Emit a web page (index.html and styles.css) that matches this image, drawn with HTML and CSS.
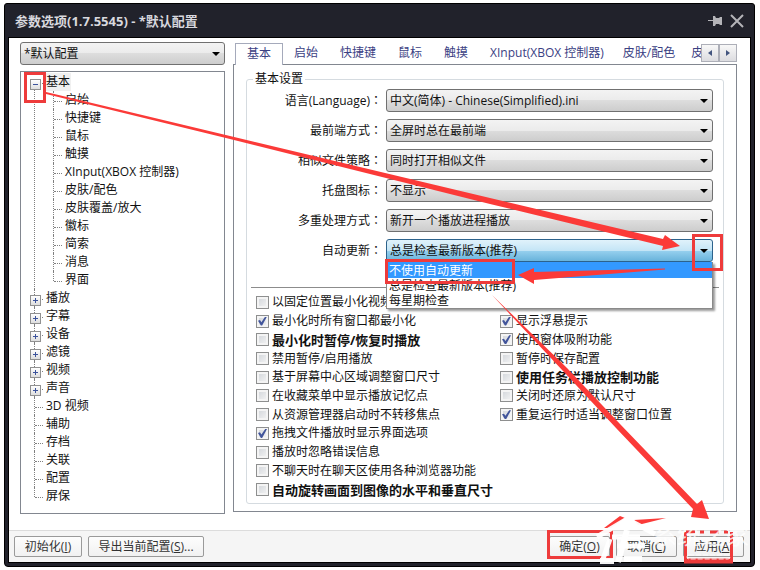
FILE: index.html
```
<!DOCTYPE html>
<html lang="zh-CN">
<head>
  <meta charset="UTF-8" />
  <meta name="viewport" content="width=device-width, initial-scale=1.0"/>
  <title>参数选项</title>
  <link rel="stylesheet" href="styles.css">
</head>
<body>
  <div class="window">
    <header class="titlebar">
      <h1>参数选项(1.7.5545) - *默认配置</h1>
      <button class="title-btn" aria-label="置顶">
        <svg width="14" height="11" viewBox="0 0 14 11"><path d="M0 5h5V1h2l1 2h3l1-1h2v8h-2l-1-1H8l-1 2H5V6H0z" fill="#b4b4b8"/></svg>
      </button>
      <button class="title-btn" aria-label="关闭">
        <svg width="14" height="14" viewBox="0 0 14 14"><path d="M1 1l12 12M13 1L1 13" stroke="#b4b4b8" stroke-width="2"/></svg>
      </button>
    </header>

    <div class="client">
      <main class="content">
        <aside class="sidebar">
          <div class="combo">
            <select aria-label="配置"><option>*默认配置</option></select>
          </div>
          <nav class="tree-box">
            <ul class="tree">
              <li class="open"><span class="node"><span class="selected">基本</span></span>
                <ul>
                  <li><span class="node">启始</span></li>
                  <li><span class="node">快捷键</span></li>
                  <li><span class="node">鼠标</span></li>
                  <li><span class="node">触摸</span></li>
                  <li><span class="node">XInput(XBOX 控制器)</span></li>
                  <li><span class="node">皮肤/配色</span></li>
                  <li><span class="node">皮肤覆盖/放大</span></li>
                  <li><span class="node">徽标</span></li>
                  <li><span class="node">简索</span></li>
                  <li><span class="node">消息</span></li>
                  <li><span class="node">界面</span></li>
                </ul>
              </li>
              <li class="closed"><span class="node">播放</span></li>
              <li class="closed"><span class="node">字幕</span></li>
              <li class="closed"><span class="node">设备</span></li>
              <li class="closed"><span class="node">滤镜</span></li>
              <li class="closed"><span class="node">视频</span></li>
              <li class="closed"><span class="node">声音</span></li>
              <li><span class="node">3D 视频</span></li>
              <li><span class="node">辅助</span></li>
              <li><span class="node">存档</span></li>
              <li><span class="node">关联</span></li>
              <li><span class="node">配置</span></li>
              <li><span class="node">屏保</span></li>
            </ul>
          </nav>
        </aside>

        <section class="settings">
          <div class="tabbar">
            <div class="tabs" role="tablist">
              <button role="tab" class="active" aria-selected="true">基本</button>
              <button role="tab">启始</button>
              <button role="tab">快捷键</button>
              <button role="tab">鼠标</button>
              <button role="tab">触摸</button>
              <button role="tab">XInput(XBOX 控制器)</button>
              <button role="tab" class="narrow">皮肤/配色</button>
              <button role="tab" class="narrow">皮肤覆盖/放大</button>
            </div>
            <div class="scroller">
              <button aria-label="向左"><svg width="4" height="6" viewBox="0 0 4 6"><path d="M4 0v6L0 3z" fill="#43557f"/></svg></button>
              <button aria-label="向右"><svg width="4" height="6" viewBox="0 0 4 6"><path d="M0 0v6l4-3z" fill="#43557f"/></svg></button>
            </div>
          </div>

          <div class="panel">
            <fieldset>
              <legend>基本设置</legend>
              <div class="fields">
                <label for="lang">语言(Language)<span lang="ja" class="colon">：</span></label>
                <div class="combo"><select id="lang"><option>中文(简体) - Chinese(Simplified).ini</option></select></div>
                <label for="top">最前端方式<span lang="ja" class="colon">：</span></label>
                <div class="combo"><select id="top"><option>全屏时总在最前端</option></select></div>
                <label for="similar">相似文件策略<span lang="ja" class="colon">：</span></label>
                <div class="combo"><select id="similar"><option>同时打开相似文件</option></select></div>
                <label for="tray">托盘图标<span lang="ja" class="colon">：</span></label>
                <div class="combo"><select id="tray"><option>不显示</option></select></div>
                <label for="multi">多重处理方式<span lang="ja" class="colon">：</span></label>
                <div class="combo"><select id="multi"><option>新开一个播放进程播放</option></select></div>
                <label for="update">自动更新<span lang="ja" class="colon">：</span></label>
                <div class="combo hot">
                  <select id="update"><option>总是检查最新版本(推荐)</option></select>
                  <ul class="droplist" role="listbox">
                    <li role="option" class="picked" aria-selected="true">不使用自动更新</li>
                    <li role="option">总是检查最新版本(推荐)</li>
                    <li role="option">每星期检查</li>
                  </ul>
                </div>
              </div>
              <hr>
              <div class="checks">
                <div class="check-col">
                  <label><input type="checkbox">以固定位置最小化视频</label>
                  <label><input type="checkbox" checked>最小化时所有窗口都最小化</label>
                  <label class="strong"><input type="checkbox">最小化时暂停/恢复时播放</label>
                  <label><input type="checkbox">禁用暂停/启用播放</label>
                  <label><input type="checkbox">基于屏幕中心区域调整窗口尺寸</label>
                  <label><input type="checkbox">在收藏菜单中显示播放记忆点</label>
                  <label><input type="checkbox">从资源管理器启动时不转移焦点</label>
                  <label><input type="checkbox" checked>拖拽文件播放时显示界面选项</label>
                  <label><input type="checkbox">播放时忽略错误信息</label>
                  <label><input type="checkbox">不聊天时在聊天区使用各种浏览器功能</label>
                  <label class="strong"><input type="checkbox">自动旋转画面到图像的水平和垂直尺寸</label>
                </div>
                <div class="check-col second">
                  <label><input type="checkbox" checked>显示浮悬提示</label>
                  <label><input type="checkbox" checked>使用窗体吸附功能</label>
                  <label><input type="checkbox">暂停时保存配置</label>
                  <label class="strong"><input type="checkbox">使用任务栏播放控制功能</label>
                  <label><input type="checkbox">关闭时还原为默认尺寸</label>
                  <label><input type="checkbox" checked>重复运行时适当调整窗口位置</label>
                </div>
              </div>
            </fieldset>
          </div>
        </section>
      </main>

      <footer class="actions">
        <button class="init">初始化(<u>I</u>)</button>
        <button class="export">导出当前配置(<u>S</u>)...</button>
        <span class="spacer"></span>
        <button>确定(<u>O</u>)</button>
        <button>取消(<u>C</u>)</button>
        <button>应用(<u>A</u>)</button>
      </footer>
    </div>
  </div>

  <!-- walkthrough marks and watermark -->
  <svg class="marks" width="760" height="570" viewBox="0 0 760 570">
    <g fill="none" stroke="#ee3b3b" stroke-width="3">
      <rect x="25.5" y="73.5" width="19" height="28"/>
      <rect x="693.5" y="235.5" width="28" height="34"/>
      <rect x="386.5" y="260.5" width="127" height="22"/>
      <rect x="548.5" y="531.5" width="63" height="26"/>
      <path d="M685.5 561V532M731.5 532v29"/>
      <path d="M686 532h45" stroke-dasharray="9 5 4 6"/>
      <path d="M684 561h49" stroke-width="5"/>
    </g>
    <g fill="#fb3a38">
      <path d="M46 92L230 136 490 198 663 239 665 235 680 246 662 250 663 246 490 204 230 139 46 94z"/>
      <path d="M518 275L534 268V272L665 268.500 665 269.500 534 280V284z"/>
      <path d="M492 295L567 368 620 424 697 504 702 500 709 519 691 517 693 509 616 428 563 371z"/>
      <path d="M604 528L620 516 625 518 611 528zM634 520L666 518 638 525z"/>
    </g>
    <g fill="none" stroke="#fff" stroke-opacity=".95">
      <path d="M597 537L627 519 655 534" stroke-width="5"/>
      <path d="M612 537h28M603 559L610 539M617 546h28" stroke-width="5"/>
      <path d="M627 530l-9 32M600 561h14M624 559h18" stroke-width="6"/>
    </g>
    <text class="watermark" x="653" y="544">系统之家</text>
    <rect x="687" y="555" width="43" height="4" rx="2" fill="none" stroke="#fff" stroke-opacity=".8" stroke-dasharray="5 2"/>
  </svg>
</body>
</html>
```
FILE: styles.css
```
* {
  box-sizing: border-box;
}
body {
  margin: 0;
  background: #fff;
  color: #111;
  font: 12px/16px "Open Sans", "Noto Sans CJK SC", sans-serif;
}
button, select, input {
  font: inherit;
  color: inherit;
  margin: 0;
}
ul {
  list-style: none;
  margin: 0;
  padding: 0;
}

/* window frame */
.window {
  display: flex;
  flex-direction: column;
  min-height: calc(100vh - 6px);
  margin: 3px 5px 3px 4px;
  padding: 0 3px 3px;
  border: 1px solid #000;
  border-radius: 3px 3px 4px 4px;
  background: #21222b;
}
.titlebar {
  display: flex;
  align-items: center;
  gap: 8px;
  height: 33px;
  padding: 0 7px;
}
.titlebar h1 {
  flex: 1;
  margin: 0;
  font-size: 13px;
  font-weight: bold;
  color: #d8d8de;
}
.title-btn {
  display: flex;
  padding: 0;
  border: 0;
  background: none;
}
.client {
  flex: 1;
  display: flex;
  flex-direction: column;
  border: 1px solid #000;
  background: #fff;
}
.content {
  flex: 1;
  display: flex;
  gap: 8px;
  padding: 4px 13px 0 11px;
}

/* combo boxes */
.combo {
  position: relative;
}
.combo select {
  display: block;
  appearance: none;
  width: 100%;
  height: 23px;
  padding: 0 20px 0 3px;
  border: 1px solid #707070;
  border-radius: 3px;
  background: linear-gradient(#f3f3f3, #ebebeb 50%, #dddddd 50%, #cdcdcd);
}
.combo::after {
  content: "";
  position: absolute;
  top: 10px;
  right: 5px;
  border: 4px solid transparent;
  border-top-color: #000;
  border-bottom: 0;
}
.combo.hot select {
  border-color: #2c628b;
  background: linear-gradient(#e0f2fb, #c4e5f6 50%, #98d1ef 50%, #68b3db);
}
.droplist {
  position: absolute;
  z-index: 2;
  top: 23px;
  left: 0;
  right: 0;
  border: 1px solid #8a8a8a;
  border-top: 0;
  background: #fff;
  box-shadow: 2px 2px 2px rgba(0, 0, 0, .4);
}
.droplist li {
  height: 15px;
  padding-left: 2px;
  line-height: 16px;
}
.droplist .picked {
  height: 16px;
  line-height: 18px;
  background: #3399ff;
  color: #fff;
}

/* left side */
.sidebar {
  display: flex;
  flex-direction: column;
  gap: 6px;
  width: 205px;
  padding-bottom: 16px;
}
.tree-box {
  flex: 1;
  padding: 1px 9px;
  border: 1px solid #828790;
}
.tree li {
  position: relative;
  padding-left: 16px;
}
.tree .node {
  display: block;
  height: 18px;
  line-height: 18px;
}
.tree .selected {
  display: inline-block;
  padding: 0 1px;
  margin: 0 -1px;
  background: #f0f0f0;
}
.tree ul {
  margin-left: 3px;
}
/* dotted guides */
.tree li::before {
  content: "";
  position: absolute;
  top: 0;
  bottom: 0;
  left: 4px;
  border-left: 1px dotted #808080;
}
.tree .node::before {
  content: "";
  position: absolute;
  top: 10px;
  left: 5px;
  width: 8px;
  border-top: 1px dotted #808080;
}
.tree li:first-child::before {
  top: 10px;
}
.tree ul li:first-child::before {
  top: 0;
}
.tree li:last-child::before {
  bottom: auto;
  height: 10px;
}
.tree .open > .node::after,
.tree .closed > .node::after {
  content: "";
  position: absolute;
  top: 6px;
  left: 0;
  width: 9px;
  height: 9px;
  border: 1px solid #919191;
  background:
    linear-gradient(#3c539c, #3c539c) center / 5px 1px no-repeat,
    linear-gradient(#fff, #dedede);
}
.tree .closed > .node::after {
  background:
    linear-gradient(#3c539c, #3c539c) center / 5px 1px no-repeat,
    linear-gradient(#3c539c, #3c539c) center / 1px 5px no-repeat,
    linear-gradient(#fff, #dedede);
}

/* right side */
.settings {
  flex: 1;
  min-width: 0;
  display: flex;
  flex-direction: column;
  padding: 1px 0 18px;
}
.tabbar {
  position: relative;
  z-index: 1;
  display: flex;
  margin-bottom: -1px;
  padding-left: 2px;
}
.tabs {
  flex: 1;
  display: flex;
  height: 22px;
  overflow: hidden;
}
.tabs button {
  flex: none;
  padding: 0 11px 2px;
  border: 0;
  background: none;
  color: #3b4183;
}
.tabs .active {
  border: 1px solid #a5aabb;
  border-bottom: 0;
  background: #fff;
}
.tabs .narrow {
  padding: 0 8px 2px;
}
.scroller {
  display: flex;
  padding-top: 1px;
}
.scroller button {
  display: flex;
  align-items: center;
  justify-content: center;
  width: 18px;
  height: 18px;
  padding: 0;
  border: 1px solid #adafb8;
  background: linear-gradient(#f8f8f8, #dcdce0);
}
.panel {
  flex: 1;
  display: flex;
  padding: 6px 12px 7px;
  border: 1px solid #828790;
}
fieldset {
  flex: 1;
  display: flex;
  flex-direction: column;
  min-width: 0;
  margin: 0;
  padding: 2px 4px 4px;
  border: 1px solid #d5dbe0;
  border-radius: 3px;
}
legend {
  margin-left: 2px;
  padding: 0 2px;
}
.fields {
  display: grid;
  grid-template-columns: 135px 1fr;
  row-gap: 7px;
  padding-right: 6px;
}
.fields label {
  padding-right: 4px;
  line-height: 22px;
  text-align: right;
}
.colon {
  font-family: "Noto Sans CJK JP", sans-serif;
}
hr {
  width: 100%;
  margin: 25px 0 5px;
  border: 0;
  border-top: 1px solid #8c8c8c;
}
.checks {
  flex: 1;
  display: grid;
  grid-template-columns: 244px 1fr;
  padding-left: 5px;
}
.check-col {
  display: grid;
  grid-template-rows: repeat(11, 1fr);
}
.check-col label {
  display: flex;
  align-items: center;
  gap: 3px;
  white-space: nowrap;
}
/* first row stays empty */
.check-col.second::before {
  content: "";
}
.check-col .strong {
  font-size: 13px;
  font-weight: bold;
}
.check-col input {
  appearance: none;
  width: 13px;
  height: 13px;
  border: 1px solid #8e8f8f;
  background: linear-gradient(135deg, #cfd3d8, #f6f6f6);
  box-shadow: inset 0 0 0 2px #f4f4f4;
}
.check-col input:checked::after {
  content: "";
  display: block;
  width: 9px;
  height: 9px;
  margin: 1px;
  background: #42559b;
  clip-path: polygon(0 45%, 22% 38%, 38% 62%, 80% 0, 100% 0, 46% 100%, 32% 100%);
}

/* bottom buttons */
.actions {
  display: flex;
  align-items: flex-start;
  gap: 6px;
  height: 32px;
  padding: 5px 6px 0 5px;
  border-top: 1px solid #dcdcdc;
  background: #f5f5f5;
}
.actions button {
  width: 61px;
  height: 21px;
  padding: 0;
  border: 1px solid #9a9a9a;
  border-radius: 2px;
  background: linear-gradient(#fdfdfd, #f1f1f1);
  color: #333;
  line-height: 18px;
  white-space: nowrap;
}
.actions .init {
  width: 68px;
}
.actions .export {
  width: 116px;
}
.spacer {
  flex: 1;
}

.marks {
  position: absolute;
  z-index: 5;
  top: 0;
  left: 0;
  pointer-events: none;
}
.watermark {
  font: 24px "Noto Sans CJK SC", sans-serif;
  fill: #fff;
  fill-opacity: .8;
}
```
